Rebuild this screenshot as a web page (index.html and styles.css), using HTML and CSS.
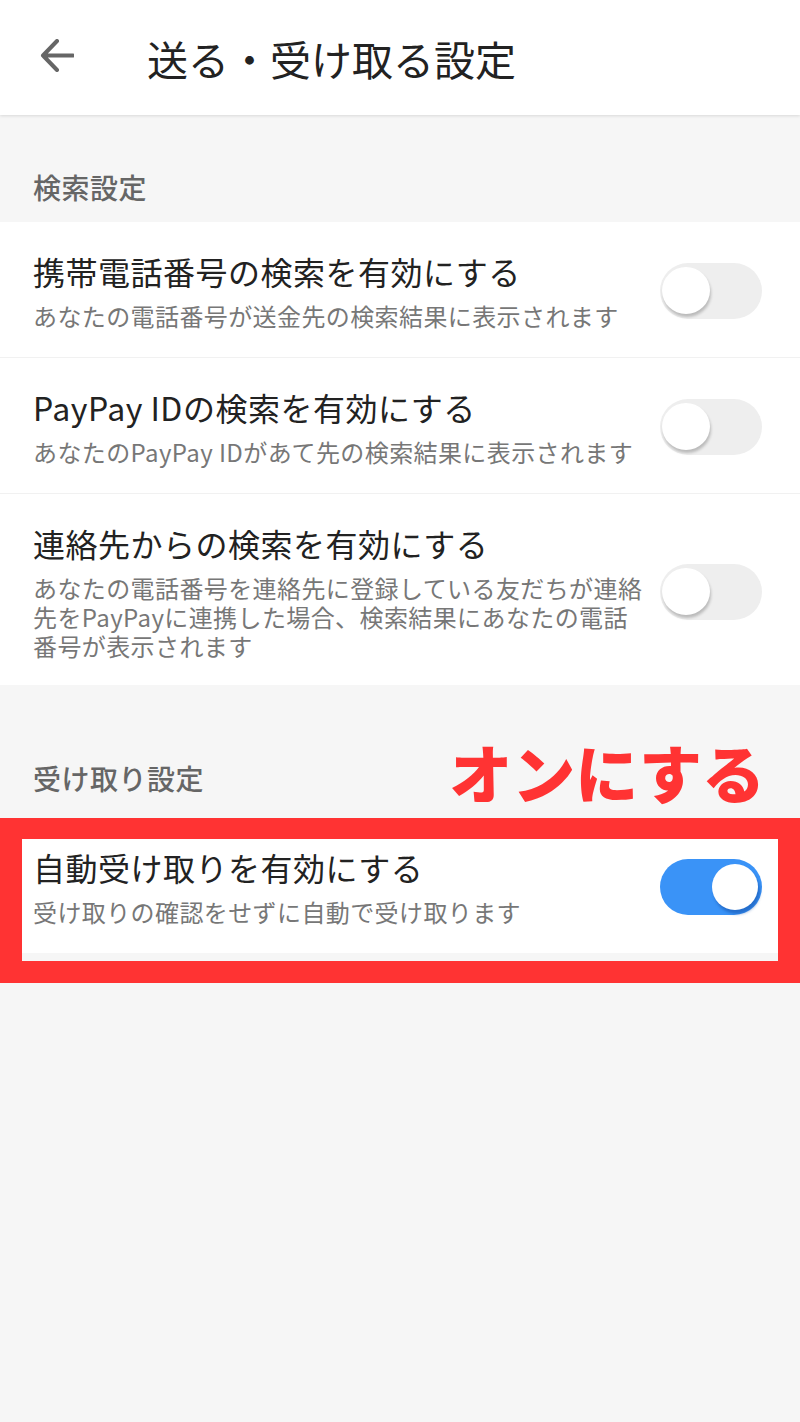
FILE: index.html
```html
<!DOCTYPE html>
<html lang="ja">
<head>
<meta charset="utf-8">
<title>送る・受け取る設定</title>
<link rel="stylesheet" href="styles.css">
</head>
<body>
<header class="appbar">
  <svg class="back" width="34" height="33" viewBox="0 0 34 33" aria-hidden="true">
    <path d="M3 16.5 H33 M17 2 L3 16.5 L17 31" fill="none" stroke="#666" stroke-width="4" stroke-linecap="round" stroke-linejoin="round"/>
  </svg>
  <h1 class="appbar-title">送る・受け取る設定</h1>
</header>

<main class="content">
  <div class="section-head">
    <span class="section-label">検索設定</span>
  </div>
  <ul class="list">
    <li class="row">
      <div class="row-text">
        <div class="row-title">携帯電話番号の検索を有効にする</div>
        <div class="row-sub">あなたの電話番号が送金先の検索結果に表示されます</div>
      </div>
      <span class="toggle"><span class="knob"></span></span>
    </li>
    <li class="row">
      <div class="row-text">
        <div class="row-title">PayPay IDの検索を有効にする</div>
        <div class="row-sub">あなたのPayPay IDがあて先の検索結果に表示されます</div>
      </div>
      <span class="toggle"><span class="knob"></span></span>
    </li>
    <li class="row row--tall">
      <div class="row-text">
        <div class="row-title">連絡先からの検索を有効にする</div>
        <div class="row-sub">あなたの電話番号を連絡先に登録している友だちが連絡<br>先をPayPayに連携した場合、検索結果にあなたの電話<br>番号が表示されます</div>
      </div>
      <span class="toggle"><span class="knob"></span></span>
    </li>
  </ul>

  <div class="section-head section-head--second">
    <span class="section-label">受け取り設定</span>
    <span class="annotation-text">オンにする</span>
  </div>
  <ul class="list list--annotated">
    <li class="row">
      <div class="row-text">
        <div class="row-title">自動受け取りを有効にする</div>
        <div class="row-sub">受け取りの確認をせずに自動で受け取ります</div>
      </div>
      <span class="toggle toggle--on"><span class="knob"></span></span>
    </li>
    <li class="annotation-box" aria-hidden="true"></li>
  </ul>
</main>
</body>
</html>
```

FILE: styles.css
```css
* {
  box-sizing: border-box;
}

html, body {
  margin: 0;
  padding: 0;
}

body {
  width: 800px;
  min-height: 1422px;
  background: #f6f6f6;
  font-family: "Noto Sans CJK JP", "Noto Sans", sans-serif;
  color: #222;
}

.appbar {
  height: 115px;
  background: #fff;
  display: flex;
  align-items: center;
  box-shadow: 0 1px 3px rgba(0, 0, 0, 0.12);
  position: relative;
  z-index: 1;
}

.back {
  margin-left: 40px;
  margin-top: -5px;
  flex: none;
}

.appbar-title {
  margin: 0 0 0 73px;
  font-size: 41px;
  font-weight: 400;
  line-height: 50px;
  color: #222;
  letter-spacing: 0;
}

.content {
  display: flex;
  flex-direction: column;
}

.section-head {
  display: flex;
  justify-content: space-between;
  align-items: flex-end;
  padding: 55px 35px 18px 33px;
}

.section-head--second {
  padding-top: 64px;
  padding-bottom: 23px;
}

.section-label {
  font-size: 28px;
  line-height: 34px;
  color: #666;
  font-weight: 500;
  letter-spacing: 0.5px;
}

.annotation-text {
  font-size: 63px;
  line-height: 44px;
  font-weight: 900;
  color: #ff3333;
  letter-spacing: 0;
  margin-bottom: 2px;
}

.list {
  list-style: none;
  margin: 0;
  padding: 0;
}

.list--annotated {
  position: relative;
}

.row {
  display: flex;
  align-items: center;
  justify-content: space-between;
  background: #fff;
  padding: 29px 38px 27px 33px;
  border-top: 1px solid #f1f1f1;
}

.row:first-child {
  border-top: none;
}

.row--tall {
  padding-bottom: 25px;
}

.row-text {
  display: flex;
  flex-direction: column;
  gap: 10px;
}

.row-title {
  font-size: 32px;
  line-height: 40px;
  color: #222;
  letter-spacing: 0.5px;
  white-space: nowrap;
}

.row-sub {
  font-size: 24px;
  line-height: 29px;
  color: #777;
  letter-spacing: 0.4px;
  white-space: nowrap;
}

.toggle {
  flex: none;
  position: relative;
  width: 102px;
  height: 56px;
  border-radius: 28px;
  background: #eeeeee;
}

.knob {
  position: absolute;
  top: 4px;
  left: 2px;
  width: 48px;
  height: 47px;
  border-radius: 50%;
  background: #fff;
  box-shadow: 1px 3px 3px rgba(0, 0, 0, 0.22);
}

.toggle--on {
  background: #3a93f7;
}

.toggle--on .knob {
  left: 52px;
  top: 5px;
  width: 46px;
  height: 46px;
  box-shadow: 2px 4px 3px rgba(20, 80, 170, 0.55);
}

.annotation-box {
  position: absolute;
  top: 0;
  left: 0;
  right: 0;
  height: 165px;
  border: 22px solid #ff3333;
  border-top-width: 21px;
  pointer-events: none;
}
```
